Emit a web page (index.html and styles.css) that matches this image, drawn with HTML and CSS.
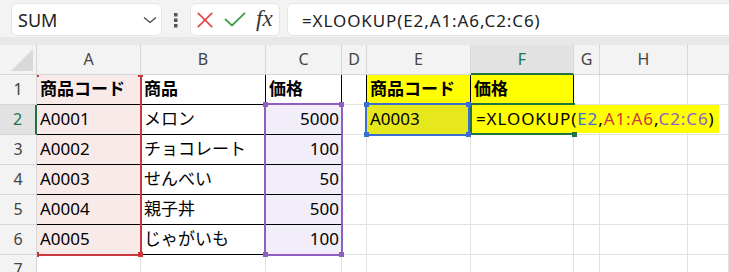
FILE: index.html
```html
<!DOCTYPE html>
<html lang="ja">
<head>
<meta charset="utf-8">
<title>XLOOKUP</title>
<link rel="stylesheet" href="styles.css">
</head>
<body>
<div class="toolbar">
  <div class="namebox">
    <span class="namebox-text">SUM</span>
    <svg class="chevron" width="14" height="8" viewBox="0 0 14 8"><polyline points="1,1.5 7,6.5 13,1.5" fill="none" stroke="#444" stroke-width="1.3"/></svg>
  </div>
  <svg class="dots" width="4" height="15" viewBox="0 0 4 15"><rect x="0" y="0" width="3.5" height="3.5" fill="#555"/><rect x="0" y="5.5" width="3.5" height="3.5" fill="#555"/><rect x="0" y="11" width="3.5" height="3.5" fill="#555"/></svg>
  <div class="fxbox">
    <svg class="xicon" width="16" height="16" viewBox="0 0 16 16"><line x1="0.8" y1="0.8" x2="15.2" y2="15.2" stroke="#e5484d" stroke-width="1.7"/><line x1="15.2" y1="0.8" x2="0.8" y2="15.2" stroke="#e5484d" stroke-width="1.7"/></svg>
    <svg class="check" width="22" height="16" viewBox="0 0 22 16"><polyline points="1,7 8,13.5 21,0.8" fill="none" stroke="#3c9e4e" stroke-width="1.8"/></svg>
    <span class="fx">fx</span>
  </div>
  <div class="formulabox"><span class="ftext">=XLOOKUP(E2,A1:A6,C2:C6)</span></div>
</div>
<div class="band"></div>
<div class="sheet">
  <div class="grid">
    <div class="c hd corner"><svg width="22" height="22" viewBox="0 0 22 22"><polygon points="22,0 22,22 0,22" fill="#d9d9d9"/></svg></div>
    <div class="c hd">A</div>
    <div class="c hd">B</div>
    <div class="c hd">C</div>
    <div class="c hd">D</div>
    <div class="c hd">E</div>
    <div class="c hd hd-sel">F</div>
    <div class="c hd">G</div>
    <div class="c hd">H</div>
    <div class="c hd hd-last"></div>

    <div class="c rh">1</div>
    <div class="c t pink b">商品コード</div>
    <div class="c t b">商品</div>
    <div class="c t b">価格</div>
    <div class="c tr"></div>
    <div class="c t yellow b">商品コード</div>
    <div class="c t yellow b">価格</div>
    <div class="c"></div>
    <div class="c"></div>
    <div class="c"></div>

    <div class="c rh rh-sel">2</div>
    <div class="c t pink">A0001</div>
    <div class="c t">メロン</div>
    <div class="c t purple num">5000</div>
    <div class="c tr"></div>
    <div class="c t eyellow">A0003</div>
    <div class="c t yellow"></div>
    <div class="c"></div>
    <div class="c"></div>
    <div class="c"></div>

    <div class="c rh">3</div>
    <div class="c t pink">A0002</div>
    <div class="c t">チョコレート</div>
    <div class="c t purple num">100</div>
    <div class="c"></div>
    <div class="c"></div>
    <div class="c"></div>
    <div class="c"></div>
    <div class="c"></div>
    <div class="c"></div>

    <div class="c rh">4</div>
    <div class="c t pink">A0003</div>
    <div class="c t">せんべい</div>
    <div class="c t purple num">50</div>
    <div class="c"></div>
    <div class="c"></div>
    <div class="c"></div>
    <div class="c"></div>
    <div class="c"></div>
    <div class="c"></div>

    <div class="c rh">5</div>
    <div class="c t pink">A0004</div>
    <div class="c t">親子丼</div>
    <div class="c t purple num">500</div>
    <div class="c"></div>
    <div class="c"></div>
    <div class="c"></div>
    <div class="c"></div>
    <div class="c"></div>
    <div class="c"></div>

    <div class="c rh">6</div>
    <div class="c t pink">A0005</div>
    <div class="c t">じゃがいも</div>
    <div class="c t purple num">100</div>
    <div class="c"></div>
    <div class="c"></div>
    <div class="c"></div>
    <div class="c"></div>
    <div class="c"></div>
    <div class="c"></div>

    <div class="c rh">7</div>
    <div class="c"></div>
    <div class="c"></div>
    <div class="c"></div>
    <div class="c"></div>
    <div class="c"></div>
    <div class="c"></div>
    <div class="c"></div>
    <div class="c"></div>
    <div class="c"></div>
  </div>
  <div class="clip">
    <div class="range range-red"><i class="h tl"></i><i class="h tr2"></i><i class="h bl"></i><i class="h br"></i></div>
    <div class="range range-purple"><i class="h tl"></i><i class="h tr2"></i><i class="h bl"></i><i class="h br"></i></div>
    <div class="active"></div>
    <div class="range range-blue"><i class="h tl"></i><i class="h tr2"></i><i class="h bl"></i><i class="h br"></i></div>
    <div class="editor">=XLOOKUP(<span class="ref-blue">E2</span>,<span class="ref-red">A1:A6</span>,<span class="ref-purple">C2:C6</span>)</div>
    <div class="fillhandle"></div>
  </div>
</div>
</body>
</html>
```

FILE: styles.css
```css
html, body {
  margin: 0;
  padding: 0;
}
body {
  width: 729px;
  height: 272px;
  overflow: hidden;
  background: #ffffff;
  font-family: "Noto Sans", "Noto Sans CJK JP", sans-serif;
  color: #000;
}

/* ---------- formula toolbar ---------- */
.toolbar {
  height: 37px;
  box-sizing: border-box;
  padding: 3px 0 0 11px;
  background: #f3f3f3;
  display: flex;
  align-items: flex-start;
  overflow: hidden;
  white-space: nowrap;
}
.namebox {
  width: 151px;
  height: 33px;
  box-sizing: border-box;
  background: #fff;
  border: 1px solid #e6e6e6;
  border-radius: 6px;
  display: flex;
  align-items: center;
  justify-content: space-between;
  padding: 0 4px 0 6px;
  flex: none;
}
.namebox-text {
  font-size: 18px;
  color: #222;
  padding-top: 1px;
}
.chevron {
  display: block;
  margin-top: 1px;
}
.dots {
  display: block;
  flex: none;
  margin: 10px 12px 0 12px;
}
.fxbox {
  width: 90px;
  height: 33px;
  box-sizing: border-box;
  background: #fff;
  border: 1px solid #e6e6e6;
  border-radius: 6px;
  display: flex;
  align-items: center;
  padding-left: 6px;
  flex: none;
}
.xicon {
  display: block;
  margin-right: 11px;
}
.check {
  display: block;
  margin-right: 10px;
}
.fx {
  font-family: "Liberation Serif", "DejaVu Serif", serif;
  font-style: italic;
  font-size: 23px;
  color: #333;
  line-height: 1;
  margin-top: -2px;
}
.formulabox {
  margin-left: 7px;
  width: 470px;
  height: 33px;
  box-sizing: border-box;
  background: #fff;
  border: 1px solid #e6e6e6;
  border-radius: 6px;
  flex: none;
  display: flex;
  align-items: center;
  padding-left: 14px;
}
.ftext {
  font-size: 17px;
  letter-spacing: 0.9px;
  color: #222;
  padding-top: 1px;
}
.band {
  height: 8px;
  background: #e8e8e8;
}

/* ---------- sheet grid ---------- */
.sheet {
  position: relative;
}
.grid {
  display: grid;
  grid-template-columns: 37px 104px 125px 76px 25px 104px 103px 26px 88px 41px;
  grid-auto-rows: 30px;
}
.c {
  box-sizing: border-box;
  border-right: 1px solid #e1e1e1;
  border-bottom: 1px solid #e1e1e1;
  font-size: 17px;
  line-height: 28px;
  padding: 0 2px 0 3px;
  white-space: nowrap;
  overflow: hidden;
  background: #fff;
}
.hd {
  background: #f3f3f3;
  border-color: #d6d6d6;
  color: #444;
  font-size: 16px;
  line-height: 28px;
  text-align: center;
  padding: 0;
}
.hd-last {
  border-right: none;
}
.hd-sel {
  background: #e2e2e2;
  color: #217346;
  border-bottom: 2px solid #217346;
}
.corner {
  position: relative;
  display: flex;
  align-items: flex-end;
  justify-content: flex-end;
  padding: 0 3px 3px 0;
}
.corner svg {
  display: block;
}
.rh {
  background: #f3f3f3;
  border-color: #d6d6d6;
  color: #444;
  font-size: 16px;
  text-align: center;
  padding: 0;
  line-height: 29px;
}
.rh-sel {
  background: #e2e2e2;
  color: #217346;
  border-right: 2px solid #217346;
}
.t {
  border-right-color: #000;
  border-bottom-color: #000;
}
.tr {
  border-right-color: #000;
}
.b {
  font-weight: 700;
}
.num {
  text-align: right;
}
.pink {
  background: #f9eaea;
}
.purple {
  background: #f2eef9;
}
.yellow {
  background: #ffff00;
}
.eyellow {
  background: #e6e81c;
}

/* ---------- overlays: reference ranges, active cell, in-cell editor ---------- */
.clip {
  position: absolute;
  left: 37px;
  top: 30px;
  right: 0;
  bottom: 0;
  overflow: hidden;
  pointer-events: none;
}
.range {
  position: absolute;
  box-sizing: border-box;
  border: 2px solid;
}
.range .h {
  position: absolute;
  width: 5px;
  height: 5px;
  z-index: 3;
}
.range .tl { top: -3px; left: -3px; }
.range .tr2 { top: -3px; right: -3px; }
.range .bl { bottom: -3px; left: -3px; }
.range .br { bottom: -3px; right: -3px; }

.range-red {
  left: -2px;
  top: -2px;
  width: 107px;
  height: 183px;
  border-color: #c8383d;
}
.range-red .h { background: #c8383d; }

.range-purple {
  left: 227px;
  top: 28px;
  width: 79px;
  height: 153px;
  border-color: #8e5ec3;
}
.range-purple .h { background: #8e5ec3; }

.range-blue {
  left: 328px;
  top: 28px;
  width: 105px;
  height: 33px;
  border-color: #3a6fd2;
}
.range-blue .h { background: #3a6fd2; }

.active {
  position: absolute;
  box-sizing: border-box;
  left: 433px;
  top: 28px;
  width: 105px;
  height: 32px;
  border: 2px solid #217346;
  z-index: 1;
}
.editor {
  position: absolute;
  left: 435px;
  top: 30px;
  width: 247px;
  height: 28px;
  background: #ffff00;
  font-size: 17px;
  line-height: 28px;
  letter-spacing: 0.9px;
  padding-left: 4px;
  box-sizing: border-box;
  white-space: nowrap;
  z-index: 2;
}
.ref-blue { color: #3f6fd6; }
.ref-red { color: #cc3a3f; }
.ref-purple { color: #8e5ec3; }
.fillhandle {
  position: absolute;
  left: 535px;
  top: 57px;
  width: 5px;
  height: 5px;
  background: #217346;
  z-index: 3;
}
```
